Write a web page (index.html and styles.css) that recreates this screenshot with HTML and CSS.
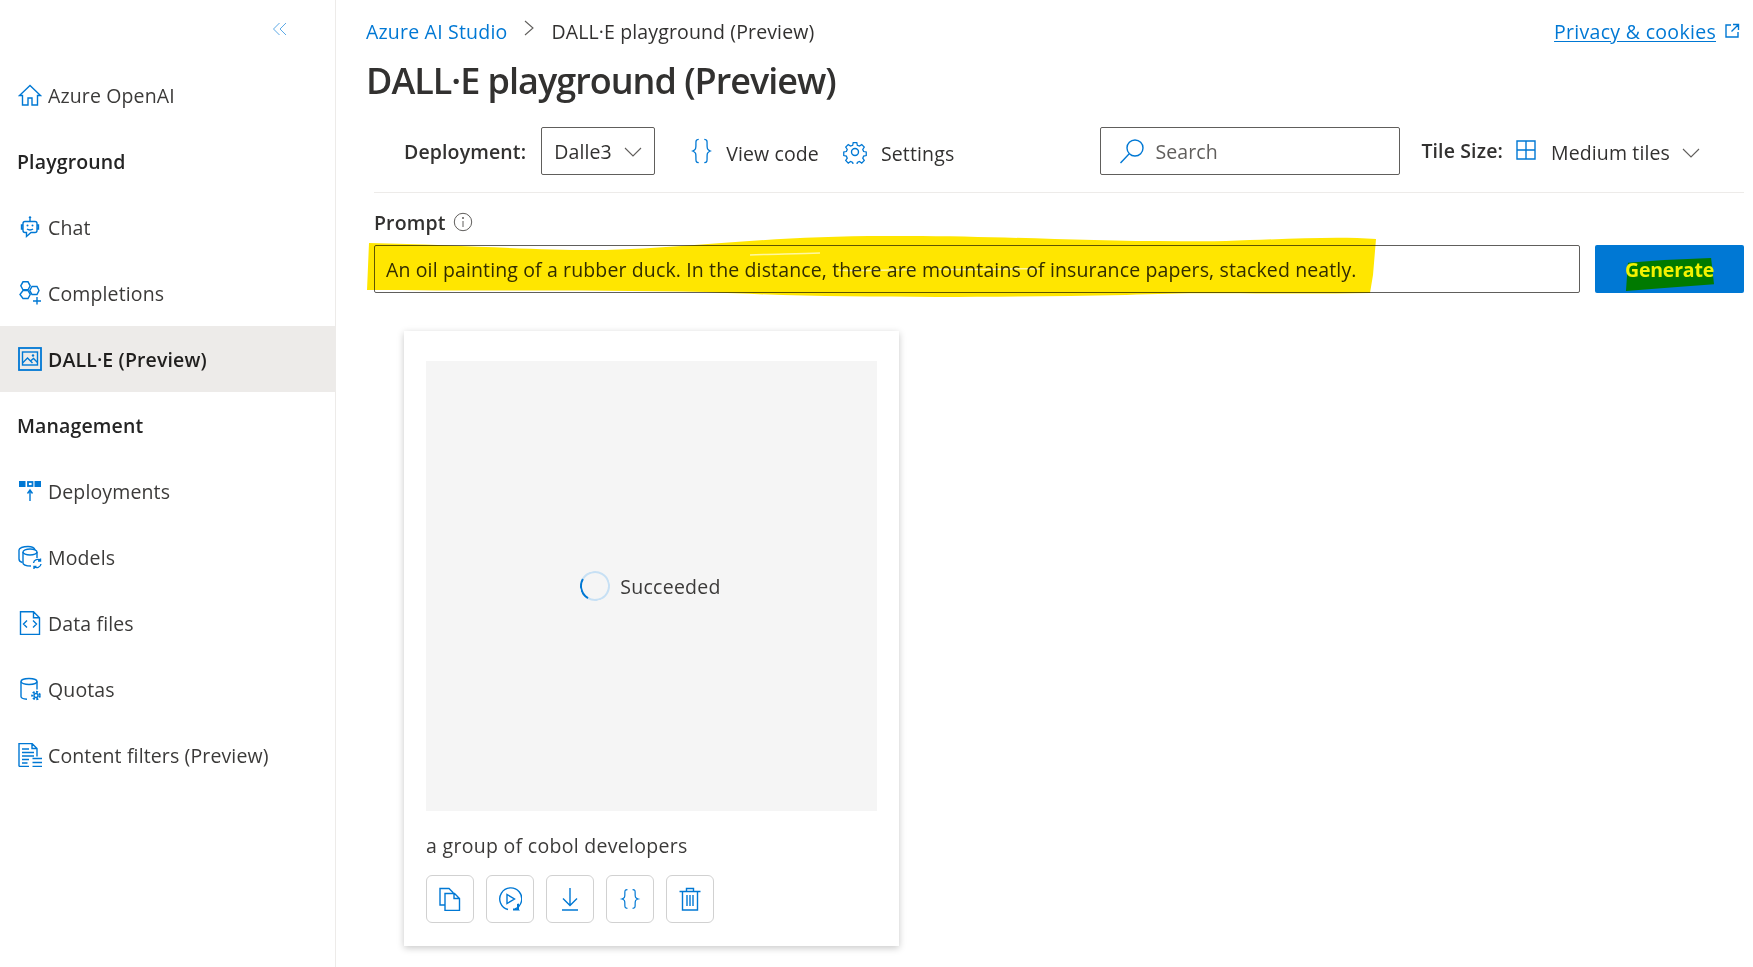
FILE: index.html
```html
<!DOCTYPE html>
<html lang="en">
<head>
<meta charset="utf-8">
<title>DALL·E playground (Preview)</title>
<link rel="stylesheet" href="styles.css">
</head>
<body>
<aside class="sidebar">
  <div class="collapse-row">
    <svg class="ico-collapse" viewBox="0 0 16 16"><path d="M7.5 2 1.5 8l6 6M14 2 8 8l6 6"/></svg>
  </div>
  <nav class="nav">
    <a class="nav-item"><svg class="ico" viewBox="0 0 24 24"><path d="M12 2.5 1.500 12.500H4.500V22h5.500v-7h4v7h5.500V12.500h3z"/></svg><span>Azure OpenAI</span></a>
    <div class="nav-group">Playground</div>
    <a class="nav-item"><svg class="ico" viewBox="0 0 24 24"><path d="M7 6.500h10a2 2 0 0 1 2 2v7a2 2 0 0 1-2 2h-4l-4.500 4v-4H7a2 2 0 0 1-2-2v-7a2 2 0 0 1 2-2ZM12 6.500V3.500M5 10H3.500v4H5M19 10h1.500v4H19M9 14c1.500 1.300 4.500 1.300 6 0"/><circle class="dot" cx="12" cy="2.500" r="1.200"/><circle class="dot" cx="9.500" cy="10.500" r="1"/><circle class="dot" cx="14.500" cy="10.500" r="1"/></svg><span>Chat</span></a>
    <a class="nav-item"><svg class="ico" viewBox="0 0 24 24"><path d="M5 .8h5l2.200 4-2.200 4H5l-2.200-4ZM5 9.500h5l2.200 4-2.200 4H5L2 13.500ZM14 5.500h5l2 4-2 4h-5l-2.200-4ZM19 16v7.500M15 20h8"/></svg><span>Completions</span></a>
    <a class="nav-item active"><svg class="ico" viewBox="0 0 24 24"><rect class="thick" x="1" y="1" width="22" height="22"/><rect x="4.500" y="5" width="15" height="13"/><path d="M4.500 16l5-5 5 5M13 13.500l2.500-2 4 4"/><circle class="dot" cx="15" cy="8.500" r="1.200"/></svg><span>DALL·E (Preview)</span></a>
    <div class="nav-group">Management</div>
    <a class="nav-item"><svg class="ico" viewBox="0 0 24 24"><rect class="dot" x="1" y="2" width="6.500" height="6"/><rect class="thick" x="10" y="3" width="4.500" height="4"/><rect class="dot" x="16.500" y="2" width="6.500" height="6"/><path d="M12 22V11.500M9.500 14.500l2.500-3.500 2.500 3.500"/></svg><span>Deployments</span></a>
    <a class="nav-item"><svg class="ico" viewBox="0 0 24 24"><path d="M17 5c-.5-2-3-3.500-7-3.500C5 1.500 1 3 1 5v9c0 1.300 1.500 3 3.500 3.500"/><ellipse cx="12" cy="7" rx="7" ry="3"/><path d="M5 7v11c0 1.500 3 3 8 3M19 7v6"/><path d="M15.500 18a4.200 4.200 0 0 1 7-2.500M22.500 13.500v2.500h-2.500M23 19a4.200 4.200 0 0 1-7 2.500M16 24v-2.500h2.500"/></svg><span>Models</span></a>
    <a class="nav-item"><svg class="ico" viewBox="0 0 24 24"><path d="M2.500 .8h13l6 6V23.500h-19ZM15.500 .8v6h6M9 9.500 5.500 13 9 16.500M15 9.500l3.500 3.500-3.500 3.500"/></svg><span>Data files</span></a>
    <a class="nav-item"><svg class="ico" viewBox="0 0 24 24"><ellipse cx="11" cy="4.500" rx="8" ry="3"/><path d="M3 4.500v15c0 1.500 2 2.500 6 2.800M19 4.500v8"/><circle cx="18" cy="18.500" r="2"/><circle class="dash" cx="18" cy="18.500" r="3.800"/></svg><span>Quotas</span></a>
    <a class="nav-item"><svg class="ico" viewBox="0 0 24 24"><path d="M1 23.500V.5h13l5 5v8M14 .5v5h5M1 23.500H11M4 6h7M4 9.500h12M4 13h12M4 16.500h7M4 20h5.500M14.500 15.500h9.500M14.500 19.500h9.500M14.500 23.500h9.500"/></svg><span>Content filters (Preview)</span></a>
  </nav>
</aside>

<main class="main">
  <div class="topbar">
    <div class="crumbs">
      <a class="crumb-link">Azure AI Studio</a>
      <svg class="crumb-sep" viewBox="0 0 12 18"><path d="M2 2l8 7-8 7"/></svg>
      <span class="crumb-current">DALL·E playground (Preview)</span>
    </div>
    <a class="privacy"><span class="privacy-text">Privacy &amp; cookies</span>
      <svg class="ico-ext" viewBox="0 0 16 16"><path d="M7 2H2v12h12V9M9 1.500h5.500V7M14 2 7.500 8.500"/></svg></a>
  </div>
  <h1 class="title">DALL·E playground (Preview)</h1>

  <div class="toolbar">
    <label class="tool-label deploy-label">Deployment:</label>
    <div class="select"><span>Dalle3</span>
      <svg class="chev" viewBox="0 0 18 10"><path d="M1 1l8 8 8-8"/></svg></div>
    <button class="tool-btn code-btn"><svg class="ico-brace" viewBox="0 0 22 28"><path d="M8 1.500C4.500 1.500 5 4 5 7.500c0 3.500 0 5-3.500 6.500C5 15.500 5 17 5 20.500s-.5 6 3 6M14 1.500c3.500 0 3 2.500 3 6s0 5 3.500 6.500C17 15.500 17 17 17 20.500s.5 6-3 6"/></svg><span>View code</span></button>
    <button class="tool-btn"><svg class="ico-gear" viewBox="0 0 24 24"><circle cx="12" cy="12" r="3.500"/><path d="M10 1.500h4l.6 3 2.300 1 2.600-1.700 2.800 2.800-1.700 2.600 1 2.300 2.900.5v4l-2.900.6-1 2.300 1.700 2.500-2.800 2.900-2.600-1.700-2.300 1-.6 2.900h-4l-.6-2.900-2.300-1-2.600 1.700-2.800-2.900 1.700-2.500-1-2.300-2.900-.6v-4l2.900-.5 1-2.300L1.700 6.600l2.800-2.800 2.600 1.700 2.300-1Z" transform="translate(1.200 1.200) scale(.9)"/></svg><span>Settings</span></button>
    <div class="search"><svg class="ico-search" viewBox="0 0 26 26"><circle cx="16" cy="10" r="8"/><path d="M10 16 1.500 25"/></svg><span>Search</span></div>
    <label class="tool-label tile-label">Tile Size:</label>
    <svg class="ico-tiles" viewBox="0 0 20 20"><path d="M1 1h18v18H1ZM10 1v18M1 10h18"/></svg>
    <span class="tile-value">Medium tiles</span>
    <svg class="chev tile-chev" viewBox="0 0 18 10"><path d="M1 1l8 8 8-8"/></svg>
  </div>

  <div class="prompt-head"><span>Prompt</span>
    <svg class="ico-info" viewBox="0 0 20 20"><circle cx="10" cy="10" r="8.700"/><path d="M10 9v6"/><circle class="info-dot" cx="10" cy="6" r="1"/></svg></div>
  <div class="prompt-row">
    <div class="prompt-input">An oil painting of a rubber duck. In the distance, there are mountains of insurance papers, stacked neatly.</div>
    <button class="generate">
      <svg class="marker-green" viewBox="0 0 92 36" preserveAspectRatio="none"><path d="M3 6 40 3 88 1 91 28 50 31 1 35Z"/></svg>
      <span>Generate</span>
    </button>
    <svg class="marker-yellow" viewBox="0 0 1012 64"><path d="M3 8C100 10 180 16 240 15 320 13 400 1 520 1 640 0 720 8 860 6 920 4 970 1 1010 4L1007 40 1004 58C900 60 840 56 760 60 600 63 460 63 340 57 220 55 100 56 1 55Z"/><path class="streak" d="M472 35C500 37 520 34 550 35M570 34C600 36 640 33 674 34M384 20C405 19 430 19 454 18"/></svg>
  </div>

  <section class="card">
    <div class="tile-image">
      <span class="spinner"></span>
      <span class="status">Succeeded</span>
    </div>
    <p class="caption">a group of cobol developers</p>
    <div class="actions">
      <button class="action"><svg viewBox="0 0 24 24"><path d="M7 18H2V1.500h9l4 4V7M7 6.500h9.500l5 5v12H7ZM16 6.500v5h5.500"/></svg></button>
      <button class="action"><svg viewBox="0 0 24 24"><path d="M10 22.500a11 11 0 1 1 7 -.5"/><path d="M9 7.500v9l7.500-4.500Z"/><path class="fill" d="M15 23.500h7l-1-1v-6l-2 .5v4.500h-4Z"/></svg></button>
      <button class="action"><svg viewBox="0 0 24 24"><path d="M12 1v17M5 11.500l7 7 7-7M4 23h16"/></svg></button>
      <button class="action"><svg viewBox="0 0 22 28"><path d="M8 3C4.500 3 5 5 5 8.500c0 3 0 4.500-3.500 5.500C5 15 5 16.500 5 19.500S4.500 25 8 25M14 3c3.500 0 3 2 3 5.500 0 3 0 4.500 3.500 5.500C17 15 17 16.500 17 19.500s.5 5.500-3 5.500"/></svg></button>
      <button class="action"><svg viewBox="0 0 24 24"><path d="M1.500 4.500h21M8.500 4.500V1.500h7v3M4.500 4.500V23h15V4.500M9 8v11M12 8v11M15 8v11"/></svg></button>
    </div>
  </section>
</main>
</body>
</html>
```
FILE: styles.css
```css
* { box-sizing: border-box; }
html, body { height: 100%; }
body {
  margin: 0;
  display: flex;
  overflow: hidden;
  background: #fff;
  color: #323130;
  font-family: "Open Sans", "Noto Sans", sans-serif;
  font-size: 19.5px;
  letter-spacing: 0.13px;
}
svg { fill: none; stroke: #0078d4; stroke-width: 1.4; flex: none; }
.dot { fill: #0078d4; stroke: none; }
.thick { stroke-width: 1.800; }
.dash { stroke-dasharray: 2 1.500; stroke-width: 2; }
.fill { fill: #0078d4; stroke: none; }

/* sidebar */
.sidebar { width: 336px; flex: none; border-right: 1px solid #edebe9; height: 100%; }
.collapse-row { height: 62px; display: flex; justify-content: flex-end; padding: 21px 47px 0 0; }
.ico-collapse { width: 16px; height: 16px; stroke: #5ca9e6; stroke-width: 1; }
.nav-item, .nav-group { height: 66px; display: flex; align-items: center; padding-left: 18px; }
.nav-group { padding-left: 17px; font-weight: 600; color: #242424; }
.nav-item { gap: 6px; color: #3b3a39; }
.nav-item.active { background: #edebe9; color: #201f1e; font-weight: 600; }
.ico { width: 24px; height: 24px; }

/* main */
.main { flex: 1; min-width: 0; padding: 0 9px 0 30px; }
.topbar { height: 62px; display: flex; align-items: center; justify-content: space-between; }
.crumbs { display: flex; align-items: center; }
.crumb-link { color: #0078d4; letter-spacing: .2px; }
.crumb-sep { width: 12px; height: 18px; stroke: #605e5c; stroke-width: 1.100; margin: -6px 16px 0 16px; }
.crumb-current { color: #323130; }
.privacy { display: flex; align-items: center; gap: 8px; color: #0078d4; padding-right: 4px; letter-spacing: .3px; }
.privacy-text { text-decoration: underline; text-underline-offset: 2px; }
.ico-ext { width: 16px; height: 16px; }
.title { margin: 0; font-size: 36px; font-weight: 600; line-height: 38px; letter-spacing: -1px; color: #323130; }

.toolbar {
  margin: 27px 0 0 8px;
  padding: 0 0 18px 30px;
  border-bottom: 1px solid #edebe9;
  display: flex;
  align-items: flex-start;
  box-sizing: content-box;
  height: 47px;
}
.tool-label { font-weight: 600; line-height: 48px; }
.deploy-label { line-height: 50px; }
.select {
  width: 114px; height: 48px; margin-left: 15px; padding: 1px 12px 0;
  border: 1px solid #605e5c; border-radius: 2px;
  display: flex; align-items: center; justify-content: space-between;
}
.chev { width: 18px; height: 10px; stroke: #605e5c; stroke-width: 1.100; }
.tool-btn {
  border: 0; background: none; padding: 2px 0 0; font: inherit; letter-spacing: inherit;
  color: #323130; display: flex; align-items: center; height: 50px; gap: 14px;
}
.code-btn { margin: 0 24px 0 36px; }
.ico-brace { width: 21px; height: 26px; margin-top: -5px; }
.ico-gear { width: 24px; height: 24px; margin-top: -2px; }
.search {
  width: 300px; height: 48px; margin-left: auto;
  border: 1px solid #605e5c; border-radius: 2px;
  display: flex; align-items: center; gap: 10px; padding-left: 18px; color: #605e5c;
}
.ico-search { width: 26px; height: 26px; }
.tile-label { margin-left: 21px; }
.ico-tiles { width: 20px; height: 20px; margin: 13px 0 0 13px; }
.tile-value { line-height: 52px; margin-left: 15px; }
.tile-chev { margin: 21px 44px 0 12px; }

.prompt-head { margin: 14px 0 0 8px; height: 30px; display: flex; align-items: center; gap: 7px; font-weight: 600; color: #323130; }
.ico-info { width: 20px; height: 20px; stroke: #605e5c; stroke-width: 1; }
.info-dot { fill: #605e5c; stroke: none; }
.prompt-row { position: relative; margin: 8px 0 0 8px; display: flex; gap: 15px; }
.prompt-input {
  flex: 1; height: 48px; border: 1px solid #605e5c; border-radius: 2px;
  display: flex; align-items: center; padding-left: 11px; white-space: nowrap;
}
.generate {
  position: relative; width: 149px; height: 48px; border: 0; border-radius: 2px;
  background: #0078d4; font: inherit; font-weight: 700; letter-spacing: -0.2px; color: #f2f200; padding: 0;
}
.generate span { position: relative; }
.marker-green { position: absolute; left: 30px; top: 12px; width: 90px; height: 35px; stroke: none; fill: #007a00; }
.marker-yellow {
  position: absolute; left: -8px; top: -10px; width: 1012px; height: 64px;
  stroke: none; fill: #ffe600; mix-blend-mode: multiply; pointer-events: none;
}
.streak { fill: none; stroke: #fff8a0; stroke-width: 1.500; }

/* card */
.card {
  width: 495px; height: 615px; margin: 38px 0 0 38px;
  padding: 30px 22px 0;
  background: #fff; box-shadow: 0 2px 7px rgba(0, 0, 0, .22);
}
.tile-image {
  width: 451px; height: 450px; background: #f5f5f5;
  display: flex; align-items: center; justify-content: center; gap: 10px; padding-right: 2px;
}
.spinner {
  width: 30px; height: 30px; border-radius: 50%;
  border: 2px solid #c7e0f4; border-left-color: #0078d4; transform: rotate(-15deg);
}
.status { color: #3b3a39; letter-spacing: .25px; }
.caption { margin: 19px 0 0; height: 32px; line-height: 32px; color: #3b3a39; letter-spacing: .3px; }
.actions { display: flex; gap: 12px; margin-top: 13px; }
.action {
  width: 48px; height: 48px; padding: 0; background: #fff;
  border: 1px solid #d1d1d1; border-radius: 6px;
  display: flex; align-items: center; justify-content: center;
}
.action svg { width: 24px; height: 24px; }
```
